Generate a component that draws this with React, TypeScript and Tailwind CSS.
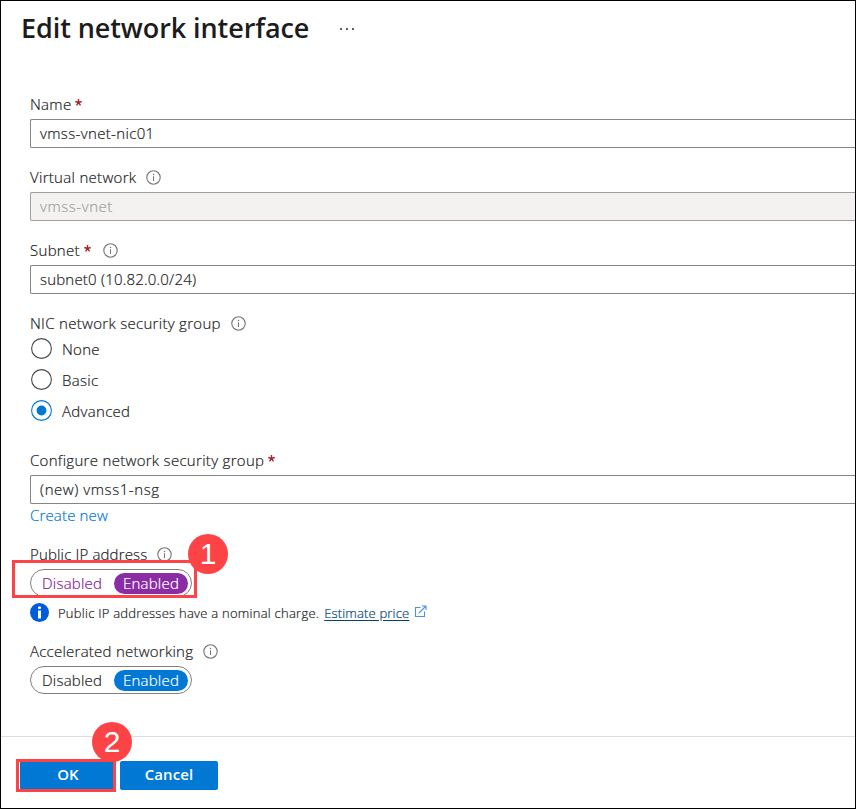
import type { ReactNode } from "react";

function InfoIcon() {
  return (
    <svg width="15" height="15" viewBox="0 0 15 15" fill="none" className="shrink-0">
      <circle cx="7.5" cy="7.5" r="6.7" stroke="#757575" strokeWidth="1.1" />
      <path d="M7.5 6.3V11" stroke="#757575" strokeWidth="1.1" />
      <circle cx="7.5" cy="4.5" r="0.75" fill="#757575" />
    </svg>
  );
}

function Label({ children, required, info, className = "" }: { children: ReactNode; required?: boolean; info?: string; className?: string }) {
  return (
    <div className={`flex items-center whitespace-nowrap ${className}`}>
      <span>{children}</span>
      {required && (
        <svg width="7" height="7" viewBox="0 0 7 7" className="mb-1 ml-1 shrink-0" role="img" aria-label="required">
          <path d="M3.5 3.5V0M3.5 3.5L.3 2.5M3.5 3.5L6.7 2.5M3.5 3.5L1.5 6.4M3.5 3.5L5.5 6.4" stroke="#a4262c" strokeWidth="1.35" />
        </svg>
      )}
      {info && <span className={info}><InfoIcon /></span>}
    </div>
  );
}

function Field({ value, disabled, spacing = "" }: { value: string; disabled?: boolean; spacing?: string }) {
  return (
    <div
      className={`flex h-[29px] items-center rounded-l-xs border border-r-0 pl-[9px] whitespace-nowrap ${spacing} ${
        disabled ? "border-[#a19f9d] bg-[#f3f2f1] text-[#a19f9d]" : "border-[#868686] bg-white"
      }`}
    >
      <span className="pb-px">{value}</span>
    </div>
  );
}

function Radio({ label, checked }: { label: string; checked?: boolean }) {
  return (
    <div className="flex h-[26px] items-center gap-2.5 pl-px">
      <svg width="21" height="21" viewBox="0 0 21 21" className="shrink-0">
        <circle cx="10.5" cy="10.5" r="9.9" fill="none" stroke={checked ? "#0078d4" : "#4a4a4a"} strokeWidth="1.1" />
        {checked && <circle cx="10.5" cy="10.5" r="4.9" fill="#0078d4" />}
      </svg>
      <span className="pt-0.5">{label}</span>
    </div>
  );
}

function Toggle({ purple }: { purple?: boolean }) {
  return (
    <div className={`flex h-7 w-[162px] items-center rounded-full border border-[#808080] pr-[3px] pl-[11px] tracking-[0.22px] ${purple ? "text-[#881798]" : ""}`}>
      <span className="w-[72px]">Disabled</span>
      <span className={`flex h-[21px] w-[74px] items-center justify-center rounded-full text-white ${purple ? "bg-[#8a2da5]" : "bg-[#0078d4]"}`}>
        Enabled
      </span>
    </div>
  );
}

function Step({ n, className }: { n: number; className: string }) {
  return (
    <div className={`absolute flex size-10 items-center justify-center rounded-full bg-[#fd4345] font-['Liberation_Sans',sans-serif] text-[30px] leading-none font-normal tracking-normal text-white ${className}`}>
      {n}
    </div>
  );
}

export default function App() {
  return (
    <div className="relative h-[809px] w-[856px] overflow-hidden border border-black bg-white font-['Open_Sans',sans-serif] text-[15px] leading-5 font-light tracking-[0.3px] text-[#1c1c1c]">
      <header className="flex h-[90px] items-start pt-[7px] pl-5">
        <h1 className="text-[27px] leading-10 font-semibold tracking-[-0.08px] whitespace-nowrap">Edit network interface</h1>
        <svg width="14" height="4" viewBox="0 0 14 4" className="mt-[19px] ml-[31px]" fill="#605e5c">
          <rect x="0" y="1" width="2" height="2" />
          <rect x="6" y="1" width="2" height="2" />
          <rect x="12" y="1" width="2" height="2" />
        </svg>
      </header>

      <main className="flex flex-col pl-[29px] [-webkit-text-stroke:0.2px_currentColor]">
        <Label required className="h-7 pb-0.5">Name</Label>
        <Field value="vmss-vnet-nic01" spacing="tracking-[0.35px]" />
        <Label info="ml-2.5" className="mt-4 h-7 pb-0.5">Virtual network</Label>
        <Field value="vmss-vnet" disabled spacing="tracking-[0.55px]" />
        <Label required info="ml-3" className="mt-4 h-7 pb-0.5">Subnet</Label>
        <Field value="subnet0 (10.82.0.0/24)" spacing="tracking-[0.2px]" />

        <Label info="ml-2.5" className="mt-4 h-[25px] pt-px">NIC network security group</Label>
        <div className="flex flex-col gap-[5px]">
          <Radio label="None" />
          <Radio label="Basic" />
          <Radio label="Advanced" checked />
        </div>

        <Label required className="mt-6 h-7 pb-0.5">Configure network security group</Label>
        <Field value="(new) vmss1-nsg" spacing="tracking-[0.56px]" />
        <a className="flex h-6 items-center pb-0.5 tracking-[0.16px] text-[#0078d4]">Create new</a>

        <Label info="ml-2.5" className="mt-[15px] h-6 pb-0.5 tracking-[0.16px]">Public IP address</Label>
        <div className="mt-0.5"><Toggle purple /></div>
        <div className="flex h-8 items-center pb-px text-[13px] whitespace-nowrap">
          <svg width="19" height="19" viewBox="0 0 19 19" className="mr-[9px] shrink-0">
            <circle cx="9.5" cy="9.5" r="9.5" fill="#015cda" />
            <rect x="8" y="3.5" width="3" height="2.5" rx="1" fill="#fff" />
            <rect x="8" y="7.5" width="3" height="8" fill="#fff" />
          </svg>
          <span className="tracking-[0.25px]">Public IP addresses have a nominal charge.</span>
          <a className="ml-[5px] tracking-[0.17px] text-[#004578] underline underline-offset-2">Estimate price</a>
          <svg width="13" height="13" viewBox="0 0 13 13" fill="none" stroke="#4a90f0" strokeWidth="1.1" className="mb-0.5 ml-[5px] shrink-0">
            <path d="M6.5 2.5H1.5V11.5H10.5V6.5M5 8L12 1M8 1H12V5" />
          </svg>
        </div>

        <Label info="ml-2.5" className="mt-[11px] h-6 pb-0.5 tracking-[0.24px]">Accelerated networking</Label>
        <div className="mt-0.5"><Toggle /></div>
      </main>

      <footer className="mt-[42px] flex gap-1 border-t border-[#dedede] pt-6 pl-[19px] leading-none font-semibold tracking-[0.1px] text-white">
        <button className="h-[29px] w-24 rounded-xs bg-[#0078d4] pb-0.5">OK</button>
        <button className="h-[29px] w-[98px] rounded-xs bg-[#0078d4] pb-0.5">Cancel</button>
      </footer>

      <div className="absolute top-[559px] left-[11px] h-[38px] w-[185px] border-3 border-[#fd4345]" />
      <Step n={1} className="top-[533px] left-[187px]" />
      <div className="absolute top-[758px] left-[15px] h-[33px] w-[100px] border-3 border-[#fd4345]" />
      <Step n={2} className="top-[721px] left-[91px]" />
    </div>
  );
}
